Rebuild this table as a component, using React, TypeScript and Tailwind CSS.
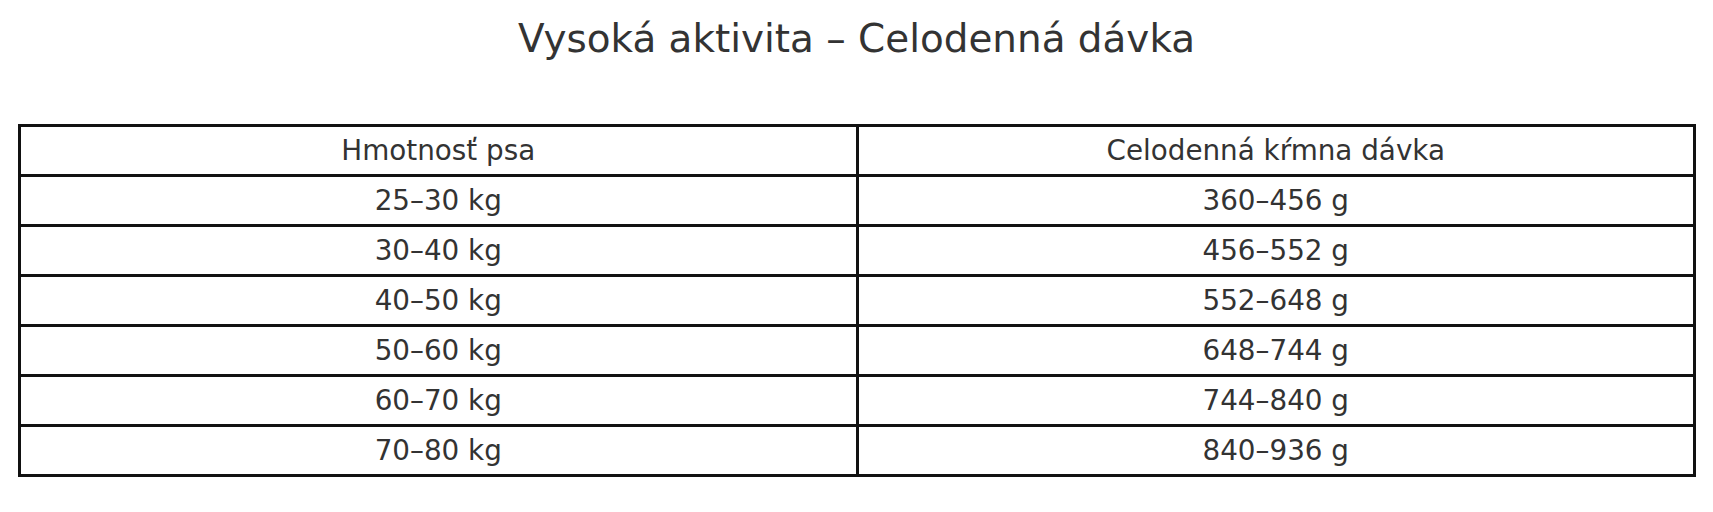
import { Fragment } from "react";

const rows: [string, string][] = [
  ["25–30 kg", "360–456 g"],
  ["30–40 kg", "456–552 g"],
  ["40–50 kg", "552–648 g"],
  ["50–60 kg", "648–744 g"],
  ["60–70 kg", "744–840 g"],
  ["70–80 kg", "840–936 g"],
];

function Cell({ children }: { children: string }) {
  return (
    <div className="flex h-[47px] items-center justify-center bg-white text-[27.8px] leading-none text-[#333333]">
      {children}
    </div>
  );
}

export default function App() {
  return (
    <div
      className="h-[512px] w-[1713px] bg-white"
      style={{ fontFamily: '"DejaVu Sans", sans-serif' }}
    >
      <h1 className="pt-[20px] text-center text-[38.9px] leading-none font-normal text-[#333333]">
        Vysoká aktivita – Celodenná dávka
      </h1>

      <div className="ml-[18px] mt-[65px] grid w-[1678px] grid-cols-2 gap-[3px] bg-[#111111] p-[3px]">
        <Cell>Hmotnosť psa</Cell>
        <Cell>Celodenná kŕmna dávka</Cell>
        {rows.map(([weight, dose]) => (
          <Fragment key={weight}>
            <Cell>{weight}</Cell>
            <Cell>{dose}</Cell>
          </Fragment>
        ))}
      </div>
    </div>
  );
}
